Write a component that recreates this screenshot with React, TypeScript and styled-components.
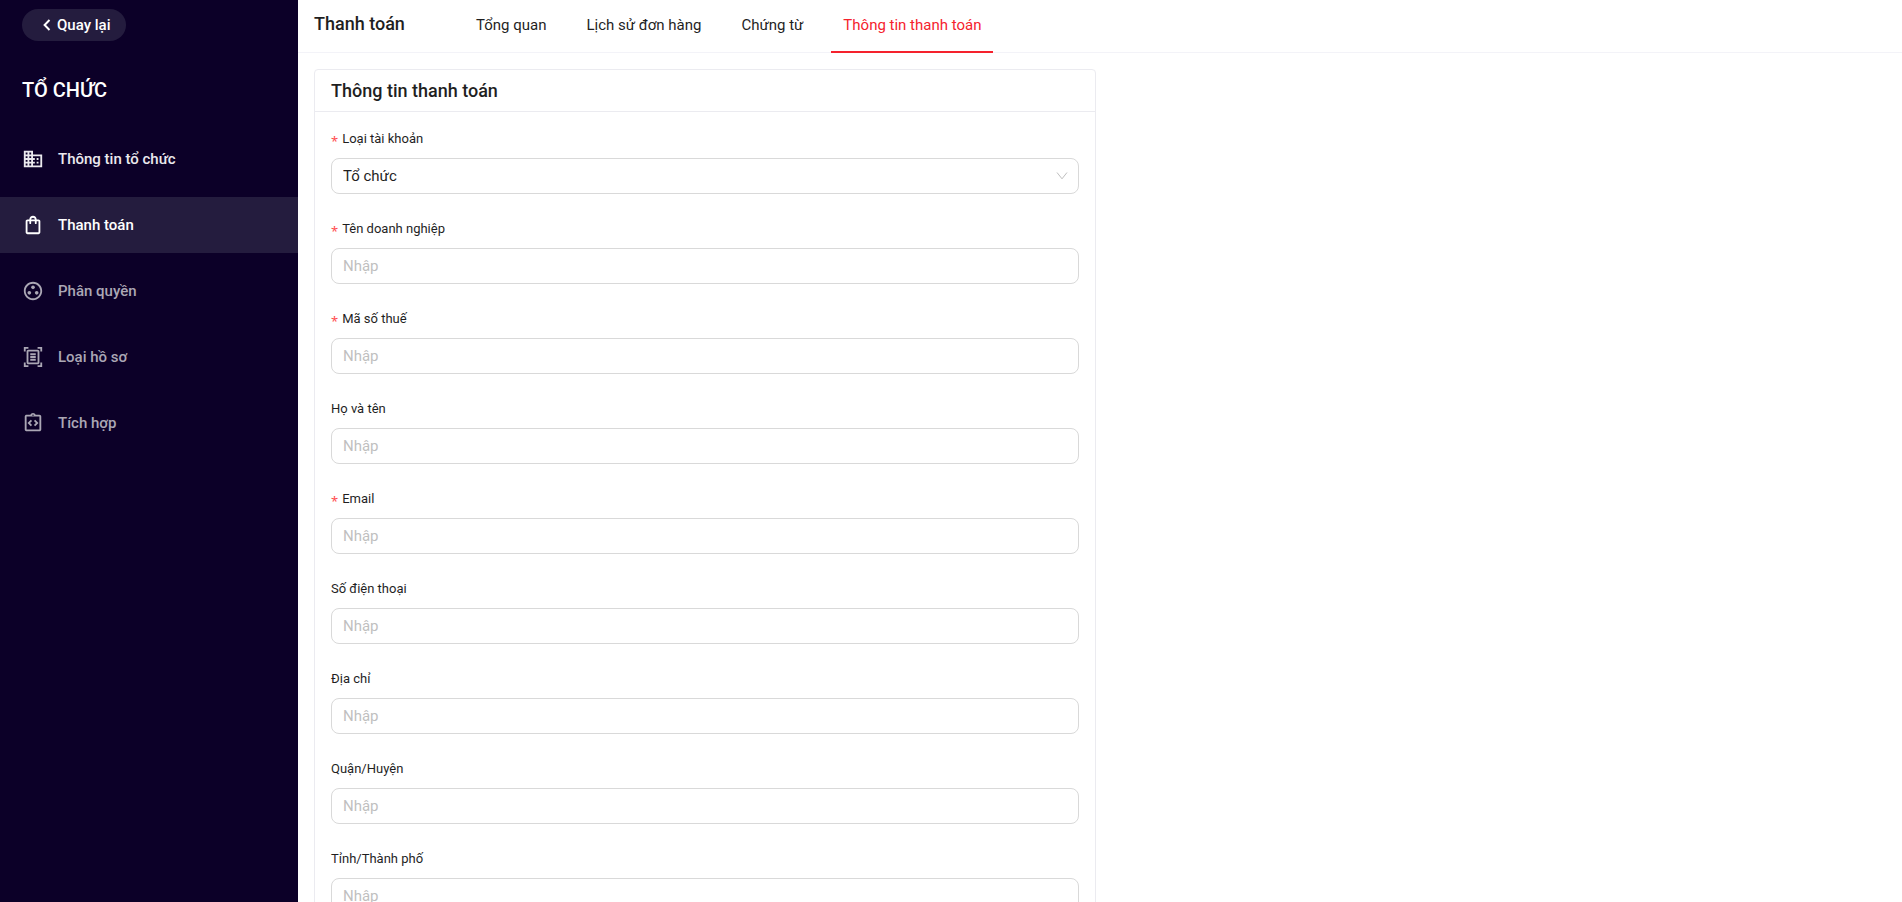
import React, { useId } from "react";
import styled, { createGlobalStyle } from "styled-components";
import {
  MdDomain,
  MdOutlineDocumentScanner,
  MdOutlineGroupWork,
  MdOutlineIntegrationInstructions,
  MdOutlineShoppingBag,
} from "react-icons/md";
import type { IconType } from "react-icons";

const GlobalStyle = createGlobalStyle`
  *, *::before, *::after { box-sizing: border-box; }
  body {
    margin: 0;
    background: #fff;
    color: #1f1f1f;
    font-family: Roboto, "Noto Sans", sans-serif;
    font-size: 15px;
    line-height: 22px;
  }
  button, input, select { font: inherit; color: inherit; }
`;

const Layout = styled.div`
  display: flex;
  height: 100vh;
`;

const Sidebar = styled.aside`
  flex: 0 0 298px;
  padding-top: 9px;
  background: #0c0028;
  color: #fff;
`;

const BackButton = styled.button`
  display: flex;
  align-items: center;
  gap: 6px;
  height: 32px;
  margin-left: 22px;
  padding: 0 16px 0 21px;
  border: 0;
  border-radius: 16px;
  background: #241c3e;
  color: #fff;
  font-weight: 500;
  cursor: pointer;
`;

const SidebarTitle = styled.h1`
  margin: 35px 22px 27px;
  font-size: 20px;
  line-height: 28px;
  font-weight: 500;
`;

const Nav = styled.nav`
  display: flex;
  flex-direction: column;
  gap: 10px;
`;

const NavLink = styled.a<{ $active?: boolean; $muted?: boolean }>`
  display: flex;
  align-items: center;
  gap: 14px;
  height: 56px;
  padding: 0 22px;
  background: ${(p) => (p.$active ? "#241c3e" : "transparent")};
  color: ${(p) => (p.$muted ? "#aba7b5" : p.$active ? "#fff" : "#ebe9ee")};
  font-weight: 500;
  text-decoration: none;
`;

const Main = styled.main`
  display: flex;
  flex: 1;
  flex-direction: column;
  min-width: 0;
`;

const Header = styled.header`
  display: flex;
  flex: 0 0 53px;
  padding: 0 16px;
  border-bottom: 1px solid #f3f3f8;
`;

const HeaderTitle = styled.h2`
  min-width: 150px;
  margin: 0;
  font-size: 18px;
  line-height: 48px;
  font-weight: 500;
`;

const Tabs = styled.nav`
  display: flex;
  gap: 16px;
  margin-bottom: -1px;
`;

const Tab = styled.a<{ $active?: boolean }>`
  padding: 0 12px;
  border-bottom: 2px solid ${(p) => (p.$active ? "#f5222d" : "transparent")};
  color: ${(p) => (p.$active ? "#f5222d" : "#1f1f1f")};
  line-height: 50px;
  text-decoration: none;
  white-space: nowrap;
`;

const Content = styled.div`
  display: grid;
  flex: 1;
  grid-template-columns: 1fr 1fr;
  gap: 8px;
  min-height: 0;
  padding: 16px;
  overflow-y: auto;
  scrollbar-width: none;
`;

const Card = styled.section`
  align-self: start;
  border: 1px solid #ebebf0;
  border-radius: 4px;
`;

const CardTitle = styled.h3`
  margin: 0;
  padding: 0 16px;
  border-bottom: 1px solid #ebebf0;
  font-size: 18px;
  line-height: 41px;
  font-weight: 500;
`;

const Form = styled.form`
  display: flex;
  flex-direction: column;
  gap: 24px;
  padding: 16px;
`;

const Field = styled.div`
  display: flex;
  flex-direction: column;
  gap: 8px;
`;

const Label = styled.label`
  display: flex;
  gap: 4px;
  height: 22px;
  font-size: 13px;
`;

const Required = styled.span`
  color: #ff4d4f;
  font-family: "Noto Sans", sans-serif;
  font-size: 13px;
  line-height: 26px;
`;

const Input = styled.input`
  width: 100%;
  height: 36px;
  padding: 0 11px;
  border: 1px solid #d9d9d9;
  border-radius: 8px;
  background: #fff;
  &::placeholder { color: #bfbfbf; opacity: 1; }
`;

const SelectBox = styled.div`
  position: relative;
  height: 36px;
`;

const Select = styled.select`
  width: 100%;
  height: 36px;
  padding: 0 32px 0 11px;
  border: 1px solid #d9d9d9;
  border-radius: 8px;
  background: #fff;
  appearance: none;
`;

const Arrow = styled.svg`
  position: absolute;
  top: 12px;
  right: 11px;
  pointer-events: none;
`;

type NavItem = { label: string; icon: IconType; active?: boolean; muted?: boolean };

const navItems: NavItem[] = [
  { label: "Thông tin tổ chức", icon: MdDomain },
  { label: "Thanh toán", icon: MdOutlineShoppingBag, active: true },
  { label: "Phân quyền", icon: MdOutlineGroupWork, muted: true },
  { label: "Loại hồ sơ", icon: MdOutlineDocumentScanner, muted: true },
  { label: "Tích hợp", icon: MdOutlineIntegrationInstructions, muted: true },
];

const tabs = ["Tổng quan", "Lịch sử đơn hàng", "Chứng từ", "Thông tin thanh toán"];

const textFields = [
  { label: "Tên doanh nghiệp", required: true },
  { label: "Mã số thuế", required: true },
  { label: "Họ và tên" },
  { label: "Email", required: true },
  { label: "Số điện thoại" },
  { label: "Địa chỉ" },
  { label: "Quận/Huyện" },
  { label: "Tỉnh/Thành phố" },
];

function FieldLabel({ id, text, required }: { id: string; text: string; required?: boolean }) {
  return (
    <Label htmlFor={id}>
      {required && <Required>*</Required>}
      {text}
    </Label>
  );
}

function TextField({ label, required }: { label: string; required?: boolean }) {
  const id = useId();
  return (
    <Field>
      <FieldLabel id={id} text={label} required={required} />
      <Input id={id} type="text" placeholder="Nhập" />
    </Field>
  );
}

function AccountTypeField() {
  const id = useId();
  return (
    <Field>
      <FieldLabel id={id} text="Loại tài khoản" required />
      <SelectBox>
        <Select id={id}>
          <option>Tổ chức</option>
        </Select>
        <Arrow width="12" height="12" viewBox="0 0 12 12" fill="none" stroke="#bfbfbf">
          <path d="M1 2.5 6 8.800l5-6.300" />
        </Arrow>
      </SelectBox>
    </Field>
  );
}

function BackIcon() {
  return (
    <svg width="8" height="12" viewBox="0 0 8 12" fill="none" stroke="currentColor" strokeWidth="2">
      <path d="M6.500 1 1.600 6l4.900 5" />
    </svg>
  );
}

export default function App() {
  return (
    <>
      <GlobalStyle />
      <Layout>
        <Sidebar>
          <BackButton type="button">
            <BackIcon />
            Quay lại
          </BackButton>
          <SidebarTitle>TỔ CHỨC</SidebarTitle>
          <Nav>
            {navItems.map(({ label, icon: Icon, active, muted }) => (
              <NavLink key={label} href="#" $active={active} $muted={muted}>
                <Icon size={22} />
                {label}
              </NavLink>
            ))}
          </Nav>
        </Sidebar>
        <Main>
          <Header>
            <HeaderTitle>Thanh toán</HeaderTitle>
            <Tabs>
              {tabs.map((tab, i) => (
                <Tab key={tab} href="#" $active={i === 3}>
                  {tab}
                </Tab>
              ))}
            </Tabs>
          </Header>
          <Content>
            <Card>
              <CardTitle>Thông tin thanh toán</CardTitle>
              <Form>
                <AccountTypeField />
                {textFields.map((field) => (
                  <TextField key={field.label} {...field} />
                ))}
              </Form>
            </Card>
          </Content>
        </Main>
      </Layout>
    </>
  );
}
